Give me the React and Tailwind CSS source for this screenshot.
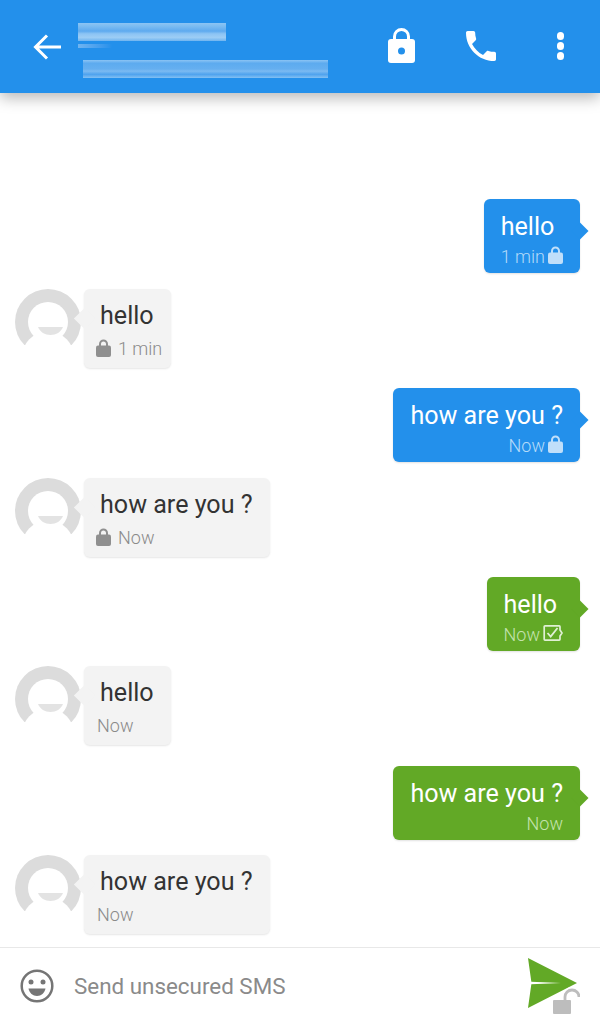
const FONT = { fontFamily: 'Roboto, sans-serif' };

function Lock({ className, color }) {
  return (
    <svg viewBox="0 0 15 18" className={className} fill="none">
      <path d="M4 8V5a3.500 3.500 0 0 1 7 0V8" stroke={color} strokeWidth="2" />
      <rect x="0" y="6.500" width="15" height="11.500" rx="2" fill={color} />
    </svg>
  );
}

function Check({ color }) {
  return (
    <svg viewBox="0 0 20 16" className="w-[20px] h-[16px] ml-[3px] mt-[-2px]" fill="none">
      <path d="M17 5V1.700a.8.8 0 0 0-.8-.8H2a.8.8 0 0 0-.8.8v12.600a.8.8 0 0 0 .8.8h14.200a.8.8 0 0 0 .8-.8V11l2-3z" stroke={color} strokeWidth="1.700" />
      <path d="M4.500 8l3.200 3.600L14.500 3" stroke={color} strokeWidth="1.800" />
    </svg>
  );
}

function Avatar() {
  return (
    <svg viewBox="0 0 66 66" className="w-[66px] h-[66px] shrink-0">
      <circle cx="33" cy="33" r="33" fill="#dcdcdc" />
      <circle cx="33" cy="33" r="20" fill="#fff" />
      <circle cx="33" cy="69" r="26.400" fill="#fff" />
      <path d="M23 38h25c-2 5-7 8-12.500 8S25 43 23 38z" fill="#e3e3e3" />
      <path d="M0 56h66v10H0z" fill="#fff" />
    </svg>
  );
}

function Sent({ text, time, color, icon, tight }) {
  const meta = color === 'blue' ? 'text-[#b5dbf9]' : 'text-[#c4e3ae]';
  const bg = color === 'blue' ? 'bg-[#2390eb]' : 'bg-[#62a926]';
  const iconColor = color === 'blue' ? '#c0dffa' : '#e0f0d4';
  return (
    <div className={`flex justify-end pr-[20px] ${tight ? 'mb-[15px]' : 'mb-[16px]'}`}>
      <div className={`relative h-[74px] rounded-[6px] pl-[17px] pr-[17px] pt-[11px] shadow-[0_1px_2px_rgba(0,0,0,0.12)] ${bg}`}>
        <div className={`absolute top-[26px] right-[-6px] w-[12px] h-[12px] rotate-45 ${bg}`} />
        <div className="relative text-[25.100px] leading-[34px] text-white">{text}</div>
        <div className={`relative flex items-center justify-end h-[24px] text-[18px] font-light ${meta}`}>
          <span>{time}</span>
          {icon === 'lock' && <Lock className="w-[15px] h-[18px] ml-[3px] mt-[-2px]" color={iconColor} />}
          {icon === 'check' && <Check color={iconColor} />}
        </div>
      </div>
    </div>
  );
}

function Received({ text, time, lock, tight }) {
  return (
    <div className={`flex items-start pl-[15px] ${tight ? 'mb-[21px]' : 'mb-[20px]'}`}>
      <Avatar />
      <div className="relative ml-[3px] h-[79px] rounded-[6px] bg-[#f3f3f3] pl-[13px] pr-[9px] pt-[10px] shadow-[0_1px_2px_rgba(0,0,0,0.1)]">
        <div className="absolute top-[22px] left-[-7px] w-[15px] h-[15px] rotate-45 bg-[#f3f3f3]" />
        <div className="relative ml-[3px] mr-[8px] text-[25.100px] leading-[34px] text-[#333333]">{text}</div>
        <div className="relative flex items-center h-[24px] mt-[3px] text-[18px] font-light text-[#8a8a8a]">
          {lock && <Lock className="w-[15px] h-[18px] mr-[7px] ml-[-1px]" color="#8f8f8f" />}
          <span>{time}</span>
        </div>
      </div>
    </div>
  );
}

export default function App() {
  return (
    <div className="flex flex-col w-[600px] h-[1024px] bg-white overflow-hidden" style={FONT}>
      <header className="relative z-10 flex items-center h-[93px] shrink-0 bg-[#2390eb] shadow-[0_5px_14px_rgba(0,0,0,0.28)]">
        <svg viewBox="0 0 28 26" className="w-[28px] h-[26px] ml-[33px] shrink-0" fill="none" stroke="#fff" strokeWidth="3">
          <path d="M28 13H3M14 1.500L2.500 13 14 24.500" />
        </svg>
        <div className="flex flex-col w-[250px] ml-[17px] h-[93px] pt-[23px]">
          <div className="w-[148px] h-[18px] bg-[linear-gradient(180deg,#8cc4f4_0%,#7dbdf2_15%,#5eaaef_45%,#8cc4f4_60%,#9ccdf5_80%,#6fb4f0_100%)]" />
          <div className="w-[34px] h-[4px] mt-[3px] bg-gradient-to-r from-[#6fb4f0] to-[#2390eb]" />
          <div className="w-[245px] h-[18px] ml-[5px] mt-[12px] bg-[linear-gradient(180deg,#8cc4f4_0%,#5dabef_18%,#65aff0_50%,#7bbaf2_62%,#4fa3ee_80%,#83c0f3_100%)]" />
        </div>
        <div className="flex-1" />
        <svg viewBox="0 0 27 35" className="w-[27px] h-[35px] shrink-0 mr-[46px] mt-[-2px]">
          <path d="M6.500 14V8.500a7 7 0 0 1 14 0V14" fill="none" stroke="#fff" strokeWidth="3" />
          <rect x="0" y="11" width="27" height="24" rx="3" fill="#fff" />
          <circle cx="13.500" cy="23" r="3.500" fill="#2390eb" />
        </svg>
        <svg viewBox="0 0 24 24" className="w-[40px] h-[40px] shrink-0 mr-[56px] mt-[-1px]" fill="#fff">
          <path d="M6.620 10.790c1.440 2.830 3.760 5.140 6.590 6.590l2.200-2.200c.27-.27.67-.36 1.020-.24 1.120.37 2.330.57 3.570.57.55 0 1 .45 1 1V20c0 .55-.45 1-1 1-9.390 0-17-7.610-17-17 0-.55.45-1 1-1h3.500c.55 0 1 .45 1 1 0 1.250.2 2.450.57 3.570.11.35.03.74-.25 1.020l-2.200 2.200z" />
        </svg>
        <div className="flex flex-col items-center gap-[2.500px] mr-[36px] mt-[-1px]">
          <div className="w-[7.500px] h-[7.500px] rounded-full bg-white" />
          <div className="w-[7.500px] h-[7.500px] rounded-full bg-white" />
          <div className="w-[7.500px] h-[7.500px] rounded-full bg-white" />
        </div>
      </header>

      <main className="flex-1 pt-[106px] overflow-hidden">
        <Sent text="hello" time="1 min" color="blue" icon="lock" />
        <Received text="hello" time="1 min" lock />
        <Sent text="how are you ?" time="Now" color="blue" icon="lock" />
        <Received text="how are you ?" time="Now" lock />
        <Sent text="hello" time="Now" color="green" icon="check" tight />
        <Received text="hello" time="Now" tight />
        <Sent text="how are you ?" time="Now" color="green" tight />
        <Received text="how are you ?" time="Now" />
      </main>

      <footer className="flex items-center h-[77px] shrink-0 border-t border-[#e8e8e8] bg-white">
        <svg viewBox="0 0 34 34" className="w-[34px] h-[34px] ml-[20px] shrink-0" fill="none">
          <circle cx="17" cy="17" r="15.300" stroke="#757575" strokeWidth="2.500" />
          <circle cx="11" cy="13" r="2.500" fill="#757575" />
          <circle cx="23" cy="13" r="2.500" fill="#757575" />
          <path d="M8.500 19.500h17c-.8 4.500-4.300 7.500-8.500 7.500s-7.700-3-8.500-7.500z" fill="#757575" />
        </svg>
        <div className="ml-[20px] mt-[2px] text-[22.400px] text-[#8a8a8a]">Send unsecured SMS</div>
        <div className="flex-1" />
        <svg viewBox="0 0 52 56" className="w-[52px] h-[56px] mr-[20px] shrink-0">
          <path d="M0 0L49 25 0 50 3.500 25z" fill="#62a926" />
          <path d="M3 23.800L33 25 3 26.200z" fill="#fff" />
          <path d="M37 43v-4a7 7 0 0 1 14 0" fill="none" stroke="#fff" strokeWidth="6" />
          <rect x="22" y="39" width="24" height="17" fill="#fff" />
          <path d="M37 43v-4a7 7 0 0 1 14 0" fill="none" stroke="#bdbdbd" strokeWidth="2.800" />
          <rect x="25" y="42" width="18" height="14" rx="1" fill="#bdbdbd" />
        </svg>
      </footer>
    </div>
  );
}
